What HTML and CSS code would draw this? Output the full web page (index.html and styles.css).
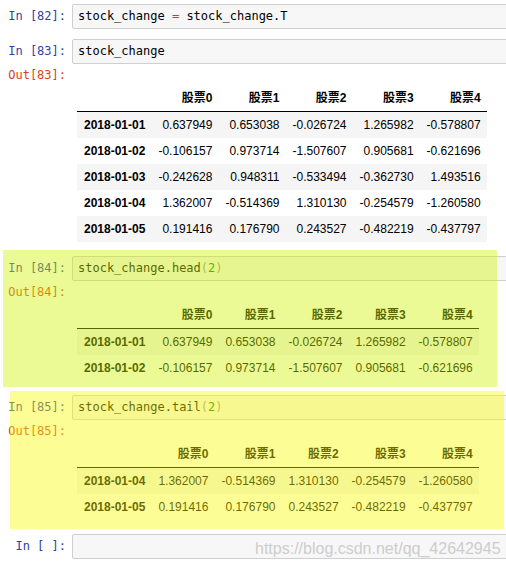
FILE: index.html
```html
<!DOCTYPE html>
<html>
<head>
<meta charset="utf-8">
<link rel="stylesheet" href="styles.css">
</head>
<body>
<div class="nb">
  <div class="cell first">
    <div class="row">
      <div class="prompt in">In [82]:</div>
      <div class="input">stock_change <span class="op">=</span> stock_change.T</div>
    </div>
  </div>

  <div class="cell">
    <div class="row">
      <div class="prompt in">In [83]:</div>
      <div class="input">stock_change</div>
    </div>
    <div class="row">
      <div class="prompt out">Out[83]:</div>
      <div class="out-body">
        <table class="df">
          <thead><tr><th></th><th>股票0</th><th>股票1</th><th>股票2</th><th>股票3</th><th>股票4</th></tr></thead>
          <tbody>
            <tr><th>2018-01-01</th><td>0.637949</td><td>0.653038</td><td>-0.026724</td><td>1.265982</td><td>-0.578807</td></tr>
            <tr><th>2018-01-02</th><td>-0.106157</td><td>0.973714</td><td>-1.507607</td><td>0.905681</td><td>-0.621696</td></tr>
            <tr><th>2018-01-03</th><td>-0.242628</td><td>0.948311</td><td>-0.533494</td><td>-0.362730</td><td>1.493516</td></tr>
            <tr><th>2018-01-04</th><td>1.362007</td><td>-0.514369</td><td>1.310130</td><td>-0.254579</td><td>-1.260580</td></tr>
            <tr><th>2018-01-05</th><td>0.191416</td><td>0.176790</td><td>0.243527</td><td>-0.482219</td><td>-0.437797</td></tr>
          </tbody>
        </table>
      </div>
    </div>
  </div>

  <div class="cell">
    <div class="row">
      <div class="prompt in">In [84]:</div>
      <div class="input">stock_change.head<span class="br">(</span><span class="num">2</span><span class="br">)</span></div>
    </div>
    <div class="row">
      <div class="prompt out">Out[84]:</div>
      <div class="out-body">
        <table class="df">
          <thead><tr><th></th><th>股票0</th><th>股票1</th><th>股票2</th><th>股票3</th><th>股票4</th></tr></thead>
          <tbody>
            <tr><th>2018-01-01</th><td>0.637949</td><td>0.653038</td><td>-0.026724</td><td>1.265982</td><td>-0.578807</td></tr>
            <tr><th>2018-01-02</th><td>-0.106157</td><td>0.973714</td><td>-1.507607</td><td>0.905681</td><td>-0.621696</td></tr>
          </tbody>
        </table>
      </div>
    </div>
  </div>

  <div class="cell">
    <div class="row">
      <div class="prompt in">In [85]:</div>
      <div class="input">stock_change.tail<span class="br">(</span><span class="num">2</span><span class="br">)</span></div>
    </div>
    <div class="row">
      <div class="prompt out">Out[85]:</div>
      <div class="out-body">
        <table class="df">
          <thead><tr><th></th><th>股票0</th><th>股票1</th><th>股票2</th><th>股票3</th><th>股票4</th></tr></thead>
          <tbody>
            <tr><th>2018-01-04</th><td>1.362007</td><td>-0.514369</td><td>1.310130</td><td>-0.254579</td><td>-1.260580</td></tr>
            <tr><th>2018-01-05</th><td>0.191416</td><td>0.176790</td><td>0.243527</td><td>-0.482219</td><td>-0.437797</td></tr>
          </tbody>
        </table>
      </div>
    </div>
  </div>

  <div class="cell">
    <div class="row">
      <div class="prompt in">In [ ]:</div>
      <div class="input"> </div>
    </div>
  </div>
</div>

<div class="hl hl-green"></div>
<div class="hl hl-yellow"></div>
<div class="watermark">https://blog.csdn.net/qq_42642945</div>
</body>
</html>
```

FILE: styles.css
```css
html, body {
  margin: 0;
  padding: 0;
  background: #ffffff;
  overflow: hidden;
}

body {
  position: relative;
  width: 506px;
  height: 567px;
}

.nb {
  width: 760px;
}

.cell {
  padding: 5px 0;
}

.cell.first {
  padding-top: 4px;
}

.row {
  display: flex;
  align-items: flex-start;
}

.prompt {
  width: 66px;
  flex: none;
  padding-right: 6px;
  text-align: right;
  font-family: "DejaVu Sans Mono", monospace;
  font-size: 12px;
  line-height: 17px;
  white-space: pre;
}

.prompt.in {
  color: #303f9f;
  padding-top: 4px;
}

.prompt.out {
  color: #d84315;
  padding-top: 3px;
}

.input {
  flex: 1;
  height: 17px;
  padding: 3px 5px;
  border: 1px solid #cfcfcf;
  border-radius: 2px;
  background: #f7f7f7;
  font-family: "DejaVu Sans Mono", monospace;
  font-size: 12px;
  line-height: 17px;
  color: #000000;
  white-space: pre;
}

.op { color: #aa22ff; }
.br { color: #999977; }
.num { color: #008800; }

.out-body {
  flex: 1;
  padding: 21px 0 4px 5px;
}

.df {
  border-collapse: collapse;
  border: none;
  font-family: "Liberation Sans", "Noto Sans CJK SC", sans-serif;
  font-size: 12px;
  line-height: 14px;
  color: #000000;
}

.df th,
.df td {
  padding: 6px 6px 6px 7px;
  text-align: right;
  vertical-align: middle;
  white-space: nowrap;
}

.df th {
  font-weight: bold;
}

.df thead th {
  vertical-align: bottom;
  border-bottom: 1px solid #000000;
}

.df tbody tr:nth-child(odd) {
  background: #f5f5f5;
}

.hl {
  position: absolute;
}

.hl-green {
  left: 3px;
  top: 250px;
  width: 494px;
  height: 137px;
  background: rgba(207, 243, 0, 0.42);
}

.hl-yellow {
  left: 10px;
  top: 391px;
  width: 494px;
  height: 138px;
  background: rgba(250, 250, 5, 0.42);
}

.watermark {
  position: absolute;
  left: 255px;
  top: 540px;
  font-family: "Liberation Sans", sans-serif;
  font-size: 16px;
  line-height: 18px;
  color: #cdcdcd;
  white-space: nowrap;
}
```
